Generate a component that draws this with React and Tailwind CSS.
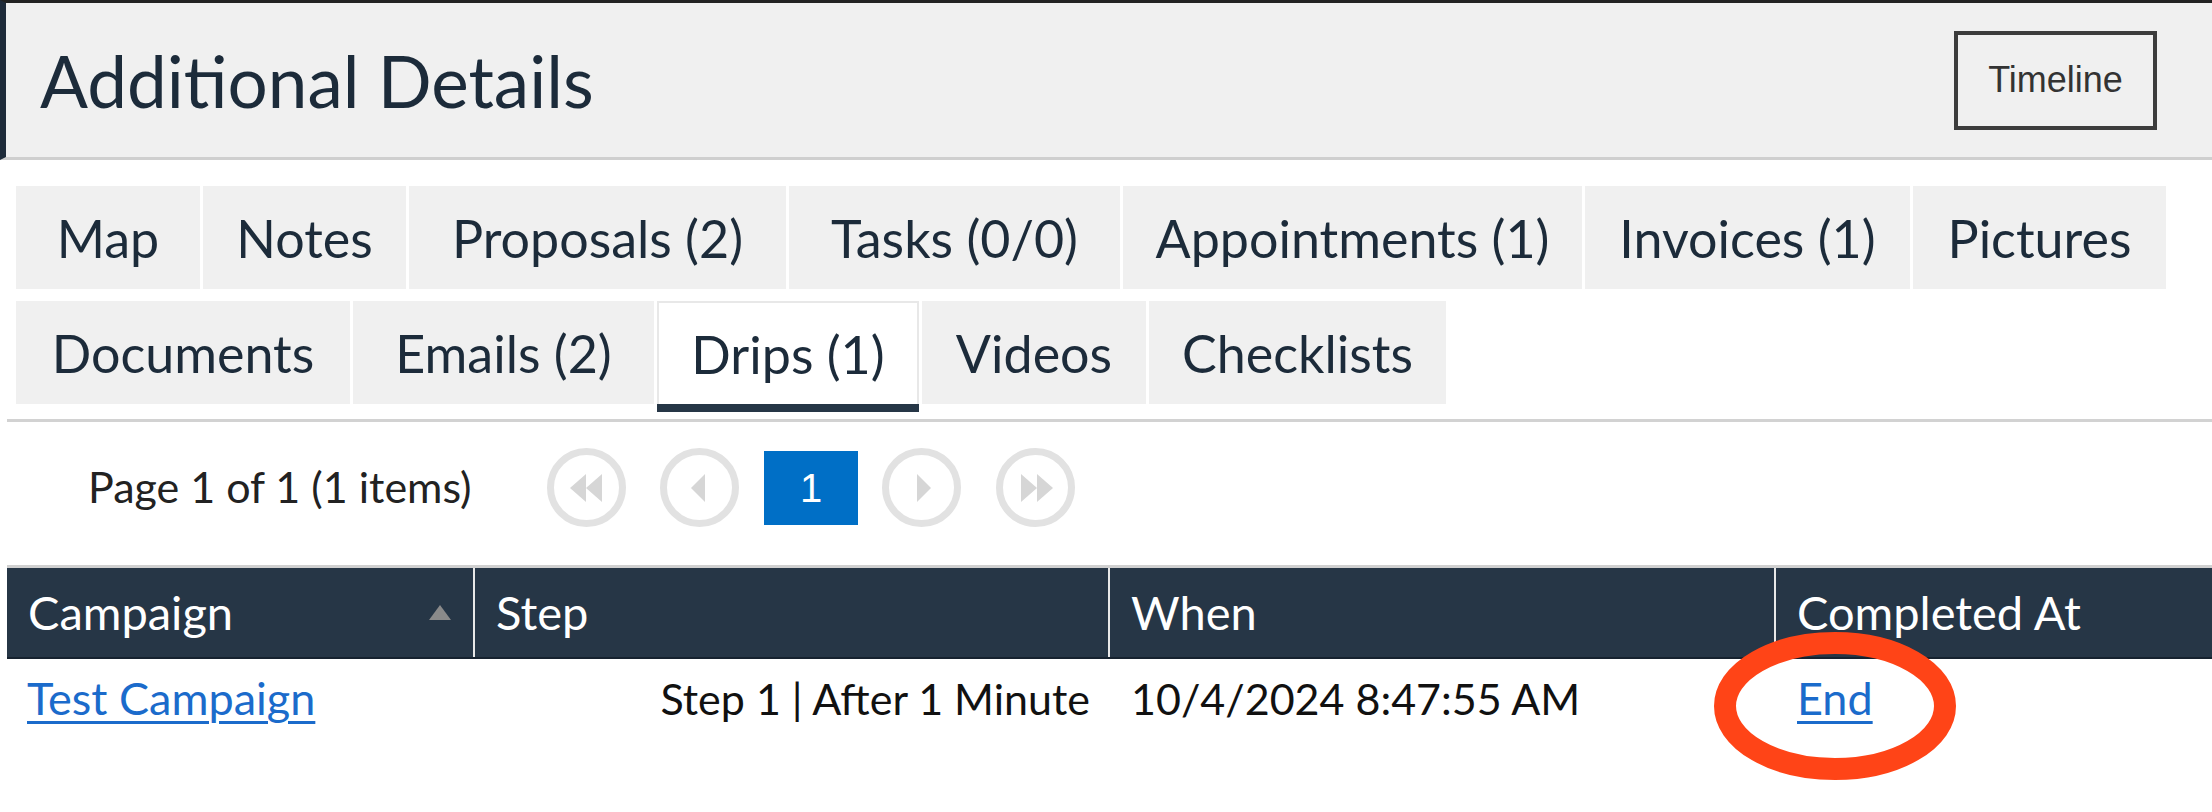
import React from "react";

const F = { fontFamily: "Lato, 'Open Sans', sans-serif" };

const row1 = [
  ["Map", "w-[184px]"],
  ["Notes", "w-[203px]"],
  ["Proposals (2)", "w-[377px]"],
  ["Tasks (0/0)", "w-[331px]"],
  ["Appointments (1)", "w-[459px]"],
  ["Invoices (1)", "w-[325px]"],
  ["Pictures", "w-[253px]"],
];
const row2 = [
  ["Documents", "w-[334px]", false],
  ["Emails (2)", "w-[301px]", false],
  ["Drips (1)", "w-[262px]", true],
  ["Videos", "w-[224px]", false],
  ["Checklists", "w-[297px]", false],
];

function Tab({ label, w, active }) {
  if (active) {
    return (
      <div className={`${w} h-[111px] flex flex-col`}>
        <div className="flex-1 bg-white border-2 border-b-0 border-[#e8e8e8] flex items-center justify-center text-[52px] text-[#1c2b3a]">
          {label}
        </div>
        <div className="h-[8px] bg-[#263646]" />
      </div>
    );
  }
  return (
    <div className={`${w} h-[103px] bg-[#f0f0f0] flex items-center justify-center text-[52px] text-[#1c2b3a]`}>
      {label}
    </div>
  );
}

function CircleBtn({ children }) {
  return (
    <div className="w-[79px] h-[79px] rounded-full border-[7px] border-[#e2e2e2] flex items-center justify-center">
      <svg width="40" height="40" viewBox="0 0 40 40" fill="#d6d6d6">
        {children}
      </svg>
    </div>
  );
}

export default function App() {
  return (
    <div className="w-[2212px] h-[812px] bg-white relative overflow-hidden" style={F}>
      {/* Header */}
      <div className="h-[160px] bg-[#f0f0f0] border-t-[3px] border-t-[#222222] border-l-[6px] border-l-[#1e2b3a] border-b-[3px] border-b-[#cfcfcf] flex items-center justify-between pl-[34px] pr-[55px]">
        <h1 className="text-[71px] text-[#1c2b3a] leading-none">Additional Details</h1>
        <button
          className="w-[203px] h-[99px] border-[4px] border-[#3c3c3c] bg-[#f0f0f0] flex items-center justify-center text-[36px] text-[#333333]"
          style={{ fontFamily: "'Liberation Sans', Arial, sans-serif" }}
        >
          Timeline
        </button>
      </div>

      {/* Tabs */}
      <div className="pl-[16px] pt-[26px] flex flex-col gap-[12px]">
        <div className="flex gap-[3px]">
          {row1.map(([l, w]) => (
            <Tab key={l} label={l} w={w} />
          ))}
        </div>
        <div className="flex gap-[3px] items-start">
          {row2.map(([l, w, a]) => (
            <Tab key={l} label={l} w={w} active={a} />
          ))}
        </div>
      </div>
      <div className="ml-[7px] mt-[7px] h-[3px] bg-[#d2d2d2]" />

      {/* Pagination */}
      <div className="flex items-center h-[79px] mt-[26px] pl-[88px]">
        <span className="text-[43px] text-[#222222] w-[459px]">Page 1 of 1 (1 items)</span>
        <div className="flex items-center">
          <CircleBtn>
            <polygon points="3,20 19,6 19,34" />
            <polygon points="19,20 35,6 35,34" />
          </CircleBtn>
          <div className="w-[34px]" />
          <CircleBtn>
            <polygon points="11,20 25,6 25,34" />
          </CircleBtn>
          <div className="w-[25px]" />
          <div
            className="w-[94px] h-[74px] bg-[#006fc6] text-white text-[40px] flex items-center justify-center"
            style={{ fontFamily: "'Liberation Sans', Arial, sans-serif" }}
          >
            1
          </div>
          <div className="w-[24px]" />
          <CircleBtn>
            <polygon points="29,20 15,6 15,34" />
          </CircleBtn>
          <div className="w-[35px]" />
          <CircleBtn>
            <polygon points="21,20 5,6 5,34" />
            <polygon points="37,20 21,6 21,34" />
          </CircleBtn>
        </div>
      </div>

      {/* Table */}
      <div className="ml-[7px] mt-[38px] border-t-[3px] border-t-[#d0d0d0]">
        <div className="flex h-[91px] bg-[#263646] border-b-[2px] border-b-[#16222f] text-white text-[47px]">
          <div className="w-[466px] flex items-center justify-between pl-[21px] pr-[22px]">
            <span>Campaign</span>
            <svg width="22" height="15" viewBox="0 0 22 15">
              <polygon points="11,0 22,15 0,15" fill="#8a8a8a" />
            </svg>
          </div>
          <div className="w-[2px] bg-[#e8e8e8]" />
          <div className="w-[633px] flex items-center pl-[21px]">Step</div>
          <div className="w-[2px] bg-[#e8e8e8]" />
          <div className="w-[664px] flex items-center pl-[21px]">When</div>
          <div className="w-[2px] bg-[#e8e8e8]" />
          <div className="flex-1 flex items-center pl-[21px]">Completed At</div>
        </div>
        <div className="flex h-[80px] items-center text-[43px] text-[#111111]">
          <div className="w-[466px] pl-[20px]">
            <a href="#" className="text-[#1b6bcb] underline underline-offset-[6px] decoration-[3px] text-[45px]">
              Test Campaign
            </a>
          </div>
          <div className="w-[2px]" />
          <div className="w-[633px] text-right pr-[18px]">Step 1 | After 1 Minute</div>
          <div className="w-[2px]" />
          <div className="w-[664px] pl-[21px]">10/4/2024 8:47:55 AM</div>
          <div className="w-[2px]" />
          <div className="flex-1 pl-[21px]">
            <a href="#" className="text-[#1b6bcb] underline underline-offset-[6px] decoration-[3px] text-[45px]">
              End
            </a>
          </div>
        </div>
      </div>

      {/* Annotation */}
      <svg className="absolute left-[1714px] top-[632px]" width="242" height="148" viewBox="0 0 242 148">
        <ellipse cx="121" cy="74" rx="110" ry="63" fill="none" stroke="#ff4417" strokeWidth="22" />
      </svg>
    </div>
  );
}
